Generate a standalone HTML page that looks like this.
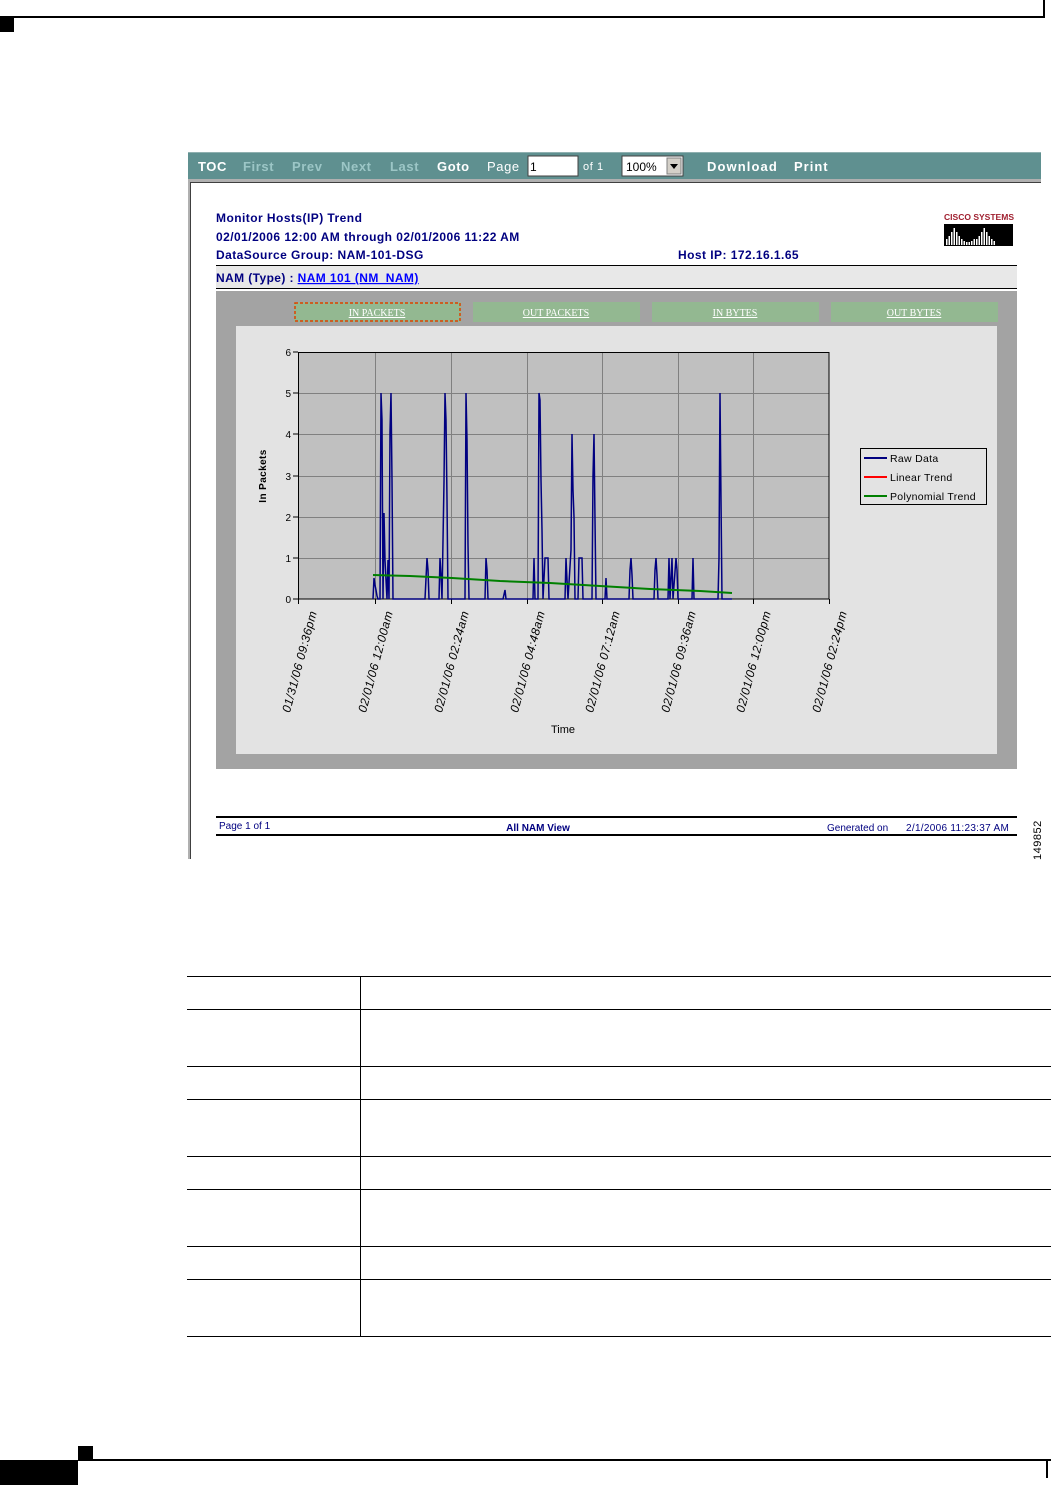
<!DOCTYPE html>
<html><head><meta charset="utf-8"><style>
html,body{margin:0;padding:0;background:#fff;}
body{width:1051px;height:1485px;position:relative;overflow:hidden;font-family:"Liberation Sans",Arial,sans-serif;}
.a{position:absolute;}
</style></head><body>
<svg class="a" style="left:0;top:0" width="1051" height="1485" xmlns="http://www.w3.org/2000/svg" font-family="Liberation Sans, Arial, sans-serif">
<rect x="0" y="16" width="1045" height="2" fill="#000"/>
<rect x="1043" y="0" width="2" height="18" fill="#000"/>
<rect x="0" y="18" width="14" height="14" fill="#000"/>
<rect x="78" y="1446" width="15" height="14" fill="#000"/>
<rect x="78" y="1459" width="973" height="2" fill="#000"/>
<rect x="0" y="1460" width="78" height="25" fill="#000"/>
<rect x="1046" y="1460" width="2" height="18" fill="#000"/>

<rect x="188" y="152" width="853" height="27" fill="#5f9090"/>
<rect x="188" y="152" width="853" height="1" fill="#8fb0b0"/>
<g font-size="13" font-weight="bold" fill="#fff" letter-spacing="0.6">
<text x="198" y="171">TOC</text>
<text x="243" y="171" fill="#9cc6c6">First</text>
<text x="292" y="171" fill="#9cc6c6">Prev</text>
<text x="341" y="171" fill="#9cc6c6">Next</text>
<text x="390" y="171" fill="#9cc6c6">Last</text>
<text x="437" y="171">Goto</text>
<text x="487" y="171" font-weight="normal">Page</text>
<text x="583" y="170" font-weight="normal" font-size="11">of 1</text>
<text x="707" y="171" letter-spacing="1.1">Download</text>
<text x="794" y="171" letter-spacing="1">Print</text>
</g>
<rect x="528" y="156" width="50" height="20" fill="#fff" stroke="#404040"/>
<text x="530" y="171" font-size="12" fill="#000">1</text>
<rect x="622" y="156" width="61" height="20" fill="#fff" stroke="#404040"/>
<text x="626" y="171" font-size="12" fill="#000">100%</text>
<rect x="667" y="158" width="14" height="16" fill="#d4d0c8" stroke="#808080"/>
<path d="M670 164h8l-4 5z" fill="#000"/>

<rect x="188" y="179" width="853" height="3" fill="#b0b0b0"/>
<rect x="188" y="179" width="2" height="680" fill="#b0b0b0"/>
<rect x="190" y="182" width="1" height="677" fill="#404040"/>
<rect x="191" y="182" width="850" height="1" fill="#404040"/>

<g font-size="12" font-weight="bold" fill="#000080" letter-spacing="0.45">
<text x="216" y="222">Monitor Hosts(IP) Trend</text>
<text x="216" y="241">02/01/2006 12:00 AM through 02/01/2006 11:22 AM</text>
<text x="216" y="259">DataSource Group: NAM-101-DSG</text>
<text x="678" y="259">Host IP:  172.16.1.65</text>
</g>
<text x="944" y="220" font-size="8" font-weight="bold" fill="#a02030" textLength="70" lengthAdjust="spacingAndGlyphs">CISCO SYSTEMS</text>
<rect x="944" y="224" width="69" height="22" fill="#000"/>
<g fill="#fff">
<rect x="946" y="239" width="1.5" height="6"/><rect x="948.5" y="236" width="1.5" height="9"/><rect x="951" y="232" width="1.5" height="13"/><rect x="953.5" y="228" width="1.5" height="17"/><rect x="956" y="232" width="1.5" height="13"/><rect x="958.5" y="236" width="1.5" height="9"/><rect x="961" y="239" width="1.5" height="6"/><rect x="963.5" y="241" width="1.5" height="4"/><rect x="966" y="242" width="1.5" height="3"/><rect x="968.5" y="242" width="1.5" height="3"/><rect x="971" y="241" width="1.5" height="4"/><rect x="973.5" y="239" width="1.5" height="6"/><rect x="976" y="239" width="1.5" height="6"/><rect x="978.5" y="236" width="1.5" height="9"/><rect x="981" y="232" width="1.5" height="13"/><rect x="983.5" y="228" width="1.5" height="17"/><rect x="986" y="232" width="1.5" height="13"/><rect x="988.5" y="236" width="1.5" height="9"/><rect x="991" y="239" width="1.5" height="6"/><rect x="993.5" y="241" width="1.5" height="4"/>
</g>

<rect x="216" y="265" width="801" height="1" fill="#000"/>
<rect x="216" y="266" width="801" height="22" fill="#e8e8e8"/>
<rect x="216" y="288" width="801" height="1" fill="#000"/>
<text x="216" y="282" font-size="12" font-weight="bold" fill="#000080" letter-spacing="0.4">NAM (Type) : <tspan fill="#0000ff" text-decoration="underline">NAM 101 (NM_NAM)</tspan></text>

<rect x="216" y="291" width="801" height="478" fill="#a3a3a3"/>
<g fill="#93b891">
<rect x="294" y="302" width="167" height="20"/><rect x="473" y="302" width="167" height="20"/><rect x="652" y="302" width="167" height="20"/><rect x="831" y="302" width="167" height="20"/>
</g>
<rect x="295" y="303" width="165" height="18" fill="none" stroke="#e04000" stroke-dasharray="3,2" stroke-width="1.5"/>
<g font-family="Liberation Serif, serif" font-size="10" fill="#fff" text-decoration="underline" text-anchor="middle">
<text x="377" y="316">IN PACKETS</text><text x="556" y="316">OUT PACKETS</text><text x="735" y="316">IN BYTES</text><text x="914" y="316">OUT BYTES</text>
</g>
<rect x="236" y="326" width="761" height="428" fill="#e3e3e3"/>

<rect x="298" y="352" width="531" height="247" fill="#c0c0c0"/>
<g stroke="#808080" stroke-width="1">
<path d="M298 393.5H829M298 434.5H829M298 476.5H829M298 517.5H829M298 558.5H829"/>
<path d="M375.5 352V599M451.5 352V599M527.5 352V599M602.5 352V599M678.5 352V599M753.5 352V599"/>
</g>
<rect x="298.5" y="352.5" width="530.5" height="246.5" fill="none" stroke="#000"/>
<path d="M298.5 599V604M375.5 599V604M451.5 599V604M527.5 599V604M602.5 599V604M678.5 599V604M753.5 599V604M829.5 599V604M293 599H298M293 558H298M293 517H298M293 476H298M293 434H298M293 393H298M293 352H298" stroke="#000"/>
<g font-size="10" fill="#000" text-anchor="end">
<text x="291" y="603">0</text><text x="291" y="562">1</text><text x="291" y="521">2</text><text x="291" y="480">3</text><text x="291" y="438">4</text><text x="291" y="397">5</text><text x="291" y="356">6</text>
</g>
<text transform="translate(266,476) rotate(-90)" text-anchor="middle" font-size="10" font-weight="bold" letter-spacing="0.4">In  Packets</text>
<polyline fill="none" stroke="#000080" stroke-width="1.5" points="373,599 374,578 375,585 376,590 377,596 378,599 380,599 381,393 382,420 383,599 384,513 385,560 386,580 387,599 388,560 389,599 390,432 391,393 392,480 393,599 425,599 427,558 428,570 429,599 439,599 440,558 441,575 442,599 444,482 445,393 446,420 447,500 448,599 465,599 466,393 467,440 468,545 469,599 485,599 486,558 487,570 488,599 503,599 505,590 506,599 533,599 534,558 535,599 538,599 539,393 540,400 541,480 542,530 543,599 545,558 548,558 549,599 565,599 566,558 567,580 568,599 571,550 572,434 573,490 574,517 575,599 578,599 579,558 582,558 583,599 592,599 593,476 594,434 595,520 596,599 605,599 606,578 607,599 629,599 630,570 631,558 632,575 633,599 654,599 655,570 656,558 657,575 658,599 668,599 669,558 670,599 672,558 673,599 676,558 677,570 678,599 680,599 692,599 693,558 694,599 718,599 719,558 720,393 721,500 722,599 732,599"/>
<path d="M373 575L410 576L452 578L500 581L550 583L600 586L650 589L700 591L732 593" stroke="#008000" stroke-width="2" fill="none"/>
<g font-size="12" font-style="italic" fill="#000" text-anchor="end" letter-spacing="0.5">
<text transform="translate(317,612) rotate(-75)">01/31/06 09:36pm</text>
<text transform="translate(393,612) rotate(-75)">02/01/06 12:00am</text>
<text transform="translate(469,612) rotate(-75)">02/01/06 02:24am</text>
<text transform="translate(545,612) rotate(-75)">02/01/06 04:48am</text>
<text transform="translate(620,612) rotate(-75)">02/01/06 07:12am</text>
<text transform="translate(696,612) rotate(-75)">02/01/06 09:36am</text>
<text transform="translate(771,612) rotate(-75)">02/01/06 12:00pm</text>
<text transform="translate(847,612) rotate(-75)">02/01/06 02:24pm</text>
</g>
<text x="563" y="733" font-size="11" text-anchor="middle">Time</text>
<rect x="860.5" y="448.5" width="126" height="56" fill="#e3e3e3" stroke="#000"/>
<path d="M864 458H887" stroke="#000080" stroke-width="2"/>
<path d="M864 477H887" stroke="#ff0000" stroke-width="2"/>
<path d="M864 496H887" stroke="#008000" stroke-width="2"/>
<g font-size="10.5" fill="#000" letter-spacing="0.3"><text x="890" y="462">Raw Data</text><text x="890" y="481">Linear Trend</text><text x="890" y="500">Polynomial Trend</text></g>

<rect x="216" y="816" width="801" height="2" fill="#000"/>
<rect x="216" y="834" width="801" height="2" fill="#000"/>
<g font-size="10" fill="#000080">
<text x="219" y="829">Page 1 of 1</text>
<text x="538" y="831" text-anchor="middle" font-weight="bold">All NAM View</text>
<text x="827" y="831">Generated on</text>
<text x="906" y="831" letter-spacing="0.3">2/1/2006 11:23:37 AM</text>
</g>
<text transform="translate(1041,860) rotate(-90)" font-size="11" fill="#000" letter-spacing="0.5">149852</text>

<g fill="#000">
<rect x="187" y="976" width="864" height="1"/>
<rect x="187" y="1009" width="864" height="1"/>
<rect x="187" y="1066" width="864" height="1"/>
<rect x="187" y="1099" width="864" height="1"/>
<rect x="187" y="1156" width="864" height="1"/>
<rect x="187" y="1189" width="864" height="1"/>
<rect x="187" y="1246" width="864" height="1"/>
<rect x="187" y="1279" width="864" height="1"/>
<rect x="187" y="1336" width="864" height="1"/>
<rect x="360" y="976" width="1" height="360"/>
</g>
</svg>
</body></html>
